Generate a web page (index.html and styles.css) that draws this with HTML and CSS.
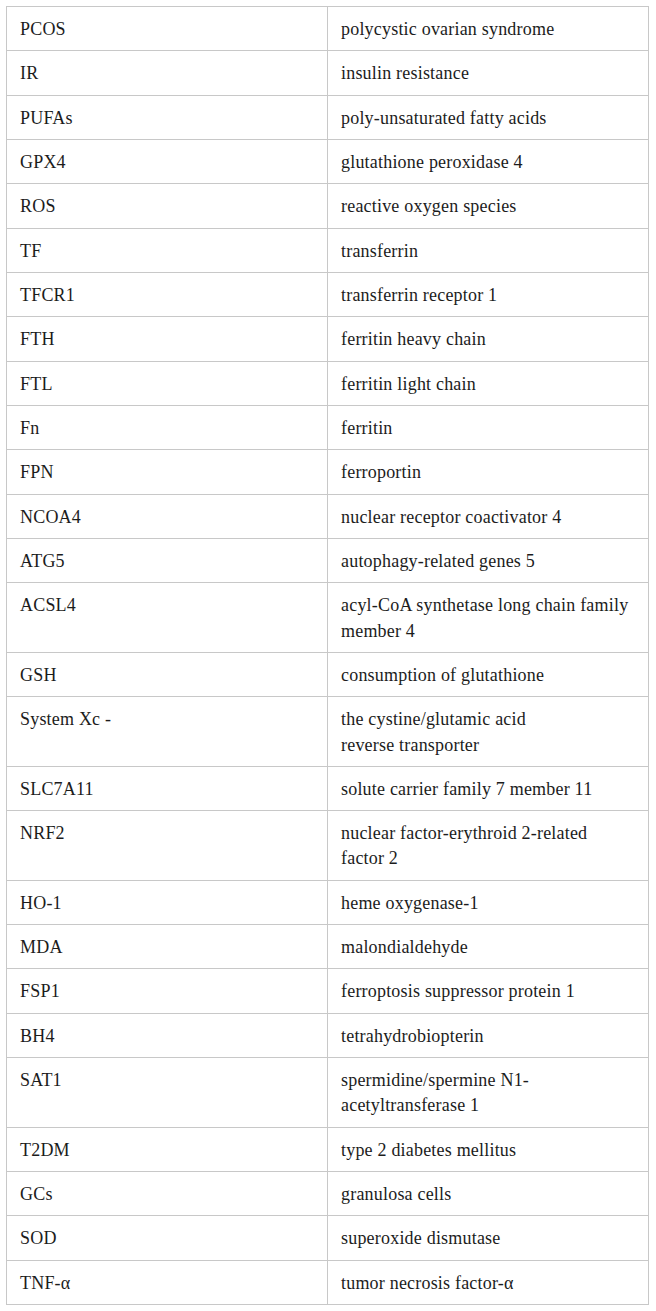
FILE: index.html
```html
<!DOCTYPE html>
<html lang="en">
<head>
<meta charset="utf-8">
<title>Abbreviations</title>
<link rel="stylesheet" href="styles.css">
</head>
<body>
<table class="abbr">
  <tbody>
    <tr><td>PCOS</td><td>polycystic ovarian syndrome</td></tr>
    <tr><td>IR</td><td>insulin resistance</td></tr>
    <tr><td>PUFAs</td><td>poly-unsaturated fatty acids</td></tr>
    <tr><td>GPX4</td><td>glutathione peroxidase 4</td></tr>
    <tr><td>ROS</td><td>reactive oxygen species</td></tr>
    <tr><td>TF</td><td>transferrin</td></tr>
    <tr><td>TFCR1</td><td>transferrin receptor 1</td></tr>
    <tr><td>FTH</td><td>ferritin heavy chain</td></tr>
    <tr><td>FTL</td><td>ferritin light chain</td></tr>
    <tr><td>Fn</td><td>ferritin</td></tr>
    <tr><td>FPN</td><td>ferroportin</td></tr>
    <tr><td>NCOA4</td><td>nuclear receptor coactivator 4</td></tr>
    <tr><td>ATG5</td><td>autophagy-related genes 5</td></tr>
    <tr><td>ACSL4</td><td>acyl-CoA synthetase long chain family member 4</td></tr>
    <tr><td>GSH</td><td>consumption of glutathione</td></tr>
    <tr><td>System Xc -</td><td>the cystine/glutamic acid<br>reverse transporter</td></tr>
    <tr><td>SLC7A11</td><td>solute carrier family 7 member 11</td></tr>
    <tr><td>NRF2</td><td>nuclear factor-erythroid 2-related factor 2</td></tr>
    <tr><td>HO-1</td><td>heme oxygenase-1</td></tr>
    <tr><td>MDA</td><td>malondialdehyde</td></tr>
    <tr><td>FSP1</td><td>ferroptosis suppressor protein 1</td></tr>
    <tr><td>BH4</td><td>tetrahydrobiopterin</td></tr>
    <tr><td>SAT1</td><td>spermidine/spermine N1-acetyltransferase 1</td></tr>
    <tr><td>T2DM</td><td>type 2 diabetes mellitus</td></tr>
    <tr><td>GCs</td><td>granulosa cells</td></tr>
    <tr><td>SOD</td><td>superoxide dismutase</td></tr>
    <tr><td>TNF-α</td><td>tumor necrosis factor-α</td></tr>
  </tbody>
</table>
</body>
</html>
```

FILE: styles.css
```css
html, body {
  margin: 0;
  padding: 0;
  background: #ffffff;
}

body {
  padding: 6px 7px 0 6px;
  font-family: "Liberation Serif", "Times New Roman", serif;
  font-size: 18px;
  letter-spacing: 0.2px;
  color: #1c1c1c;
}

.abbr {
  width: 643px;
  border-collapse: collapse;
  table-layout: fixed;
  border: 1px solid #c4c4c4;
}

.abbr td {
  width: 50%;
  border: 1px solid #c8c8c8;
  padding: 10px 13px 8.15px 13px;
  line-height: 25.2px;
  vertical-align: top;
  text-align: left;
}
```
